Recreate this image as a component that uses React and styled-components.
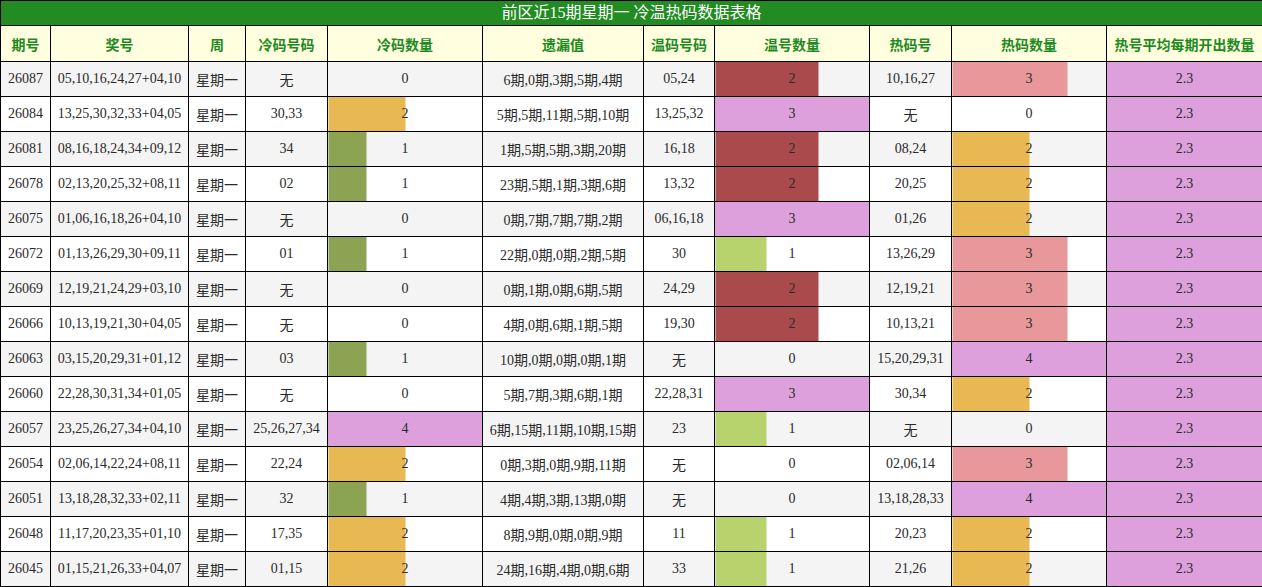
import React from "react";
import styled, { createGlobalStyle } from "styled-components";

const Global = createGlobalStyle`
  html, body { margin: 0; padding: 0; background: #fff; }
  body { font-family: "Liberation Serif", "Noto Sans CJK SC", serif; }
`;

const COLORS = {
  olive: "#8ba353",
  gold: "#e8b953",
  plum: "#dda0dd",
  darkred: "#aa4a4c",
  lightgreen: "#b8d36d",
  pink: "#e8979a",
};

const COLD = { max: 4, c: { 1: COLORS.olive, 2: COLORS.gold, 3: COLORS.pink, 4: COLORS.plum } };
const WARM = { max: 3, c: { 1: COLORS.lightgreen, 2: COLORS.darkred, 3: COLORS.plum } };
const HOT = { max: 4, c: { 1: COLORS.olive, 2: COLORS.gold, 3: COLORS.pink, 4: COLORS.plum } };

const rows = [
  ["26087", "05,10,16,24,27+04,10", "无", 0, "6期,0期,3期,5期,4期", "05,24", 2, "10,16,27", 3],
  ["26084", "13,25,30,32,33+04,05", "30,33", 2, "5期,5期,11期,5期,10期", "13,25,32", 3, "无", 0],
  ["26081", "08,16,18,24,34+09,12", "34", 1, "1期,5期,5期,3期,20期", "16,18", 2, "08,24", 2],
  ["26078", "02,13,20,25,32+08,11", "02", 1, "23期,5期,1期,3期,6期", "13,32", 2, "20,25", 2],
  ["26075", "01,06,16,18,26+04,10", "无", 0, "0期,7期,7期,7期,2期", "06,16,18", 3, "01,26", 2],
  ["26072", "01,13,26,29,30+09,11", "01", 1, "22期,0期,0期,2期,5期", "30", 1, "13,26,29", 3],
  ["26069", "12,19,21,24,29+03,10", "无", 0, "0期,1期,0期,6期,5期", "24,29", 2, "12,19,21", 3],
  ["26066", "10,13,19,21,30+04,05", "无", 0, "4期,0期,6期,1期,5期", "19,30", 2, "10,13,21", 3],
  ["26063", "03,15,20,29,31+01,12", "03", 1, "10期,0期,0期,0期,1期", "无", 0, "15,20,29,31", 4],
  ["26060", "22,28,30,31,34+01,05", "无", 0, "5期,7期,3期,6期,1期", "22,28,31", 3, "30,34", 2],
  ["26057", "23,25,26,27,34+04,10", "25,26,27,34", 4, "6期,15期,11期,10期,15期", "23", 1, "无", 0],
  ["26054", "02,06,14,22,24+08,11", "22,24", 2, "0期,3期,0期,9期,11期", "无", 0, "02,06,14", 3],
  ["26051", "13,18,28,32,33+02,11", "32", 1, "4期,4期,3期,13期,0期", "无", 0, "13,18,28,33", 4],
  ["26048", "11,17,20,23,35+01,10", "17,35", 2, "8期,9期,0期,0期,9期", "11", 1, "20,23", 2],
  ["26045", "01,15,21,26,33+04,07", "01,15", 2, "24期,16期,4期,0期,6期", "33", 1, "21,26", 2],
];

const headers = ["期号", "奖号", "周", "冷码号码", "冷码数量", "遗漏值", "温码号码", "温号数量", "热码号", "热码数量", "热号平均每期开出数量"];
const widths = [50, 138, 57, 82, 155, 161, 71, 155, 82, 155, 156];

const Table = styled.table`
  width: 1262px;
  table-layout: fixed;
  border-collapse: collapse;
  font-family: "Liberation Serif", "Noto Sans CJK SC", serif;
  font-size: 14px;
  color: #2a2a2a;
`;

const TitleCell = styled.th`
  height: 24px;
  padding: 0;
  background: #228b22;
  color: #fff;
  font-weight: normal;
  font-size: 16px;
  border: 1px solid #000;
  text-align: center;
  vertical-align: middle;
  line-height: 24px;
`;

const HeadCell = styled.th`
  height: 35px;
  padding: 0;
  background: #ffffe0;
  color: #1e8a1e;
  font-family: "Noto Sans CJK SC", sans-serif;
  font-weight: bold;
  font-size: 14px;
  border: 1px solid #000;
  text-align: center;
  vertical-align: middle;
  white-space: nowrap;
  overflow: hidden;
`;

const Row = styled.tr`
  background: ${(p) => (p.$alt ? "#f4f4f4" : "#ffffff")};
`;

const Cell = styled.td`
  height: 34px;
  padding: 0;
  border: 1px solid #000;
  text-align: center;
  vertical-align: middle;
  white-space: nowrap;
  overflow: hidden;
`;

const BarCell = styled(Cell)`
  background: ${(p) =>
    p.$pct > 0
      ? `linear-gradient(to right, ${p.$color} ${p.$pct}%, transparent ${p.$pct}%)`
      : "transparent"};
`;

const AvgCell = styled(Cell)`
  background: #dda0dd;
`;

function Bar({ value, scale }) {
  const pct = (value / scale.max) * 100;
  return (
    <BarCell $pct={pct} $color={scale.c[value]}>
      {value}
    </BarCell>
  );
}

export default function App() {
  return (
    <>
      <Global />
      <Table>
        <colgroup>
          {widths.map((w, i) => (
            <col key={i} style={{ width: w }} />
          ))}
        </colgroup>
        <thead>
          <tr>
            <TitleCell colSpan={11}>前区近15期星期一 冷温热码数据表格</TitleCell>
          </tr>
          <tr>
            {headers.map((h) => (
              <HeadCell key={h}>{h}</HeadCell>
            ))}
          </tr>
        </thead>
        <tbody>
          {rows.map((r, i) => (
            <Row key={r[0]} $alt={i % 2 === 0}>
              <Cell>{r[0]}</Cell>
              <Cell>{r[1]}</Cell>
              <Cell>星期一</Cell>
              <Cell>{r[2]}</Cell>
              <Bar value={r[3]} scale={COLD} />
              <Cell>{r[4]}</Cell>
              <Cell>{r[5]}</Cell>
              <Bar value={r[6]} scale={WARM} />
              <Cell>{r[7]}</Cell>
              <Bar value={r[8]} scale={HOT} />
              <AvgCell>2.3</AvgCell>
            </Row>
          ))}
        </tbody>
      </Table>
    </>
  );
}
